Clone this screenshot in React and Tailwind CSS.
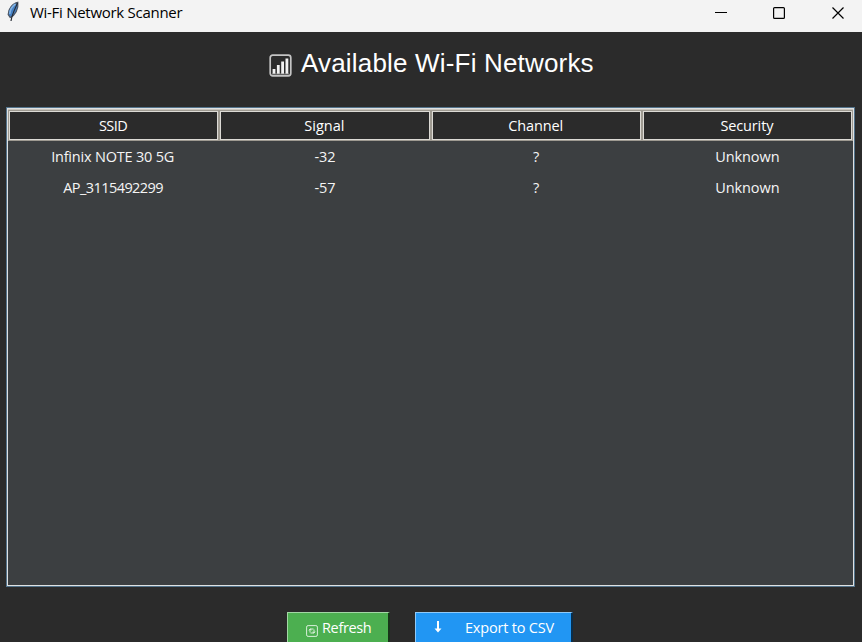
const columns = ['SSID', 'Signal', 'Channel', 'Security'];
const networks = [
  ['Infinix NOTE 30 5G', '-32', '?', 'Unknown'],
  ['AP_3115492299', '-57', '?', 'Unknown'],
];

// Letter spacing for each table label.
const labelStyles = {
  SSID: 'tracking-[-0.5px]',
  Signal: 'tracking-[0px]',
  'Infinix NOTE 30 5G': 'pr-[2px] tracking-[-0.2px]',
  AP_3115492299: 'pr-[1px] tracking-[-0.57px]',
};

function Feather() {
  return (
    <svg className="ml-[6px] h-[22px] w-[14px]" viewBox="0 0 14 22">
      <path d="M11.800 2.300C7 3 2 9 2.200 14.500l2 3C9 15.500 12.800 9 11.800 2.300z" fill="#4580c4" stroke="#4b5563" strokeWidth="1.2" />
      <path d="M9.500 4C6.500 6 4 10 3.800 14" fill="none" stroke="#7fb2e5" strokeWidth="1.6" />
      <path d="M11.500 3C9.500 8 6 14 5 21" fill="none" stroke="#252a33" strokeWidth="1.200" />
    </svg>
  );
}

function TitleBar() {
  return (
    <header className="flex h-8 shrink-0 items-start bg-[#f3f3f3] text-black">
      <Feather />
      <span className="ml-[10px] mt-[2px] w-[160px] whitespace-nowrap text-[15px] leading-5 tracking-[-0.28px]">Wi-Fi Network Scanner</span>
      <svg className="ml-auto h-[32px] w-[162px]" viewBox="0 0 162 32" fill="none" stroke="#000">
        <path d="M15 12.500H27" />
        <rect x="73.600" y="7.600" width="10.800" height="10.800" rx="1" strokeWidth="1.2" />
        <path d="M132.500 7.500L143.500 18.500M143.500 7.500L132.500 18.500" strokeWidth="1.2" />
      </svg>
    </header>
  );
}

function SignalIcon() {
  return (
    <svg className="mt-[14px] h-[23px] w-[23px]" viewBox="0 0 23 23" fill="none">
      <rect x="1.200" y="1.200" width="20.600" height="20.600" rx="2.500" stroke="#c4c4c4" strokeWidth="1.700" />
      <path d="M5 15V20M9.300 11V20M13.600 7.500V20M17.900 4.500V20" stroke="#f2f2f2" strokeWidth="2.800" />
      <path d="M3 20H20" stroke="#999" />
    </svg>
  );
}

export default function App() {
  return (
    <main className="flex h-[642px] w-[862px] flex-col overflow-hidden bg-[#2b2b2b] font-['Open_Sans','Noto_Sans',sans-serif] text-white">
      <TitleBar />
      <div className="flex h-[75px] shrink-0 pl-[269px] pt-[8px]">
        <SignalIcon />
        <h1 className="ml-[9px] mt-[7px] whitespace-nowrap font-['Liberation_Sans',Arial,sans-serif] text-[26px] leading-8 tracking-[0.18px]">Available Wi-Fi Networks</h1>
      </div>

      <section className="ml-[6px] h-[480px] w-[849px] shrink-0 border border-[#53738b] bg-[#3c3f41]">
        <div className="h-full border border-[#dfe1e2]">
          <div className="grid h-[32px] grid-cols-4 border-t border-[#c9c5bd] text-[14.5px]">
            {columns.map((column) => (
              <div key={column} className="border border-[#9e9a91]">
                <div className="flex h-full items-center justify-center border border-[#dcdad5] bg-[#2b2b2b] pr-px">
                  <span className={`leading-[22px] ${labelStyles[column] ?? 'tracking-[-0.13px]'}`}>{column}</span>
                </div>
              </div>
            ))}
          </div>
          {networks.map((network) => (
            <div key={network[0]} className="grid h-[31px] grid-cols-4 text-[14.5px] text-[#f5f5f5]">
              {network.map((value, index) => (
                <span key={index} className={`flex items-center justify-center whitespace-nowrap ${labelStyles[value] ?? 'tracking-[-0.1px]'}`}>{value}</span>
              ))}
            </div>
          ))}
        </div>
      </section>

      <footer className="mt-[25px] flex h-[35px] shrink-0 pl-[287px] text-[14.5px]">
        <button className="flex w-[103px] border-2 border-t-1 border-l-1 border-[#a3d7a5] border-b-[#19351a] border-r-[#19351a] bg-[#4caf50] pt-[4px]">
          <svg className="ml-[18px] mt-[8px] h-3 w-3" viewBox="0 0 12 12" fill="none" stroke="#d9efda">
            <rect x=".6" y=".6" width="10.800" height="10.800" rx="1.500" />
            <path d="M4 7.500V4H7.500M8 4.500V8H4.500M3 5.500L4 4L5.500 5M6.500 7L8 8L9 6.500" />
          </svg>
          <span className="ml-[4px] leading-[21px] tracking-[-0.35px]">Refresh</span>
        </button>
        <button className="ml-[25px] flex w-[158px] border-2 border-t-1 border-l-1 border-[#8fcaf9] border-b-[#0a2e4b] border-r-[#0a2e4b] bg-[#2196f3] pt-[4px]">
          <svg className="ml-[18px] mt-[4px] h-3 w-[8px]" viewBox="0 0 8 12" fill="none" stroke="white">
            <path d="M4 0V9" strokeWidth="2" />
            <path d="M.5 7.500H7.500L4 11.500z" fill="white" stroke="none" />
          </svg>
          <span className="ml-[23px] whitespace-nowrap leading-[21px] tracking-[-0.2px]">Export to CSV</span>
        </button>
      </footer>
    </main>
  );
}
